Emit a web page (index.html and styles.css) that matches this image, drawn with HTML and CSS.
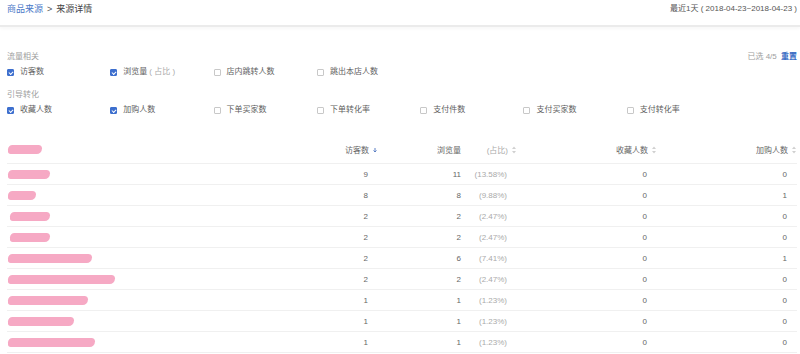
FILE: index.html
```html
<!DOCTYPE html>
<html lang="zh">
<head>
<meta charset="utf-8">
<title>来源详情</title>
<link rel="stylesheet" href="styles.css">
</head>
<body>
<header class="topbar">
  <div class="crumbs"><a class="crumb-link">商品来源</a><span class="crumb-sep">&gt;</span><span class="crumb-cur">来源详情</span></div>
  <div class="range">最近1天 ( 2018-04-23~2018-04-23 )</div>
</header>

<section class="filters">
  <div class="group-head">
    <span class="group-label">流量相关</span>
    <span class="picked">已选 4/5 <a class="reset">重置</a></span>
  </div>
  <div class="check-row">
    <label class="check"><span class="box on"></span>访客数</label>
    <label class="check"><span class="box on"></span>浏览量<span class="sub">( 占比 )</span></label>
    <label class="check"><span class="box"></span>店内跳转人数</label>
    <label class="check"><span class="box"></span>跳出本店人数</label>
  </div>
  <div class="group-head second">
    <span class="group-label">引导转化</span>
  </div>
  <div class="check-row">
    <label class="check"><span class="box on"></span>收藏人数</label>
    <label class="check"><span class="box on"></span>加购人数</label>
    <label class="check"><span class="box"></span>下单买家数</label>
    <label class="check"><span class="box"></span>下单转化率</label>
    <label class="check"><span class="box"></span>支付件数</label>
    <label class="check"><span class="box"></span>支付买家数</label>
    <label class="check"><span class="box"></span>支付转化率</label>
  </div>
</section>

<section class="table">
  <div class="tr th">
    <div class="c name"><span class="blob" style="width:34px"></span></div>
    <div class="c v">访客数<svg class="sort" viewBox="0 0 6 8"><path d="M3 2v4M1.5 4.5l1.5 1.5 1.5-1.5" fill="none" stroke="#5b7fc4" stroke-width="1"/></svg></div>
    <div class="c pv">浏览量</div>
    <div class="c pct">(占比)<svg class="sort" viewBox="0 0 6 8"><path d="M3 0.5L5 3H1z M3 7.5L5 5H1z" fill="#d0d0d0"/></svg></div>
    <div class="c col">收藏人数<svg class="sort" viewBox="0 0 6 8"><path d="M3 0.5L5 3H1z M3 7.5L5 5H1z" fill="#d0d0d0"/></svg></div>
    <div class="c add">加购人数<svg class="sort" viewBox="0 0 6 8"><path d="M3 0.5L5 3H1z M3 7.5L5 5H1z" fill="#d0d0d0"/></svg></div>
  </div>
  <div class="tr"><div class="c name"><span class="blob" style="width:42px"></span></div><div class="c v">9</div><div class="c pv">11</div><div class="c pct">(13.58%)</div><div class="c col">0</div><div class="c add">0</div></div>
  <div class="tr"><div class="c name"><span class="blob" style="width:28px"></span></div><div class="c v">8</div><div class="c pv">8</div><div class="c pct">(9.88%)</div><div class="c col">0</div><div class="c add">1</div></div>
  <div class="tr"><div class="c name"><span class="blob shift" style="width:40px"></span></div><div class="c v">2</div><div class="c pv">2</div><div class="c pct">(2.47%)</div><div class="c col">0</div><div class="c add">0</div></div>
  <div class="tr"><div class="c name"><span class="blob shift" style="width:40px"></span></div><div class="c v">2</div><div class="c pv">2</div><div class="c pct">(2.47%)</div><div class="c col">0</div><div class="c add">0</div></div>
  <div class="tr"><div class="c name"><span class="blob" style="width:84px"></span></div><div class="c v">2</div><div class="c pv">6</div><div class="c pct">(7.41%)</div><div class="c col">0</div><div class="c add">1</div></div>
  <div class="tr"><div class="c name"><span class="blob" style="width:107px"></span></div><div class="c v">2</div><div class="c pv">2</div><div class="c pct">(2.47%)</div><div class="c col">0</div><div class="c add">0</div></div>
  <div class="tr"><div class="c name"><span class="blob" style="width:80px"></span></div><div class="c v">1</div><div class="c pv">1</div><div class="c pct">(1.23%)</div><div class="c col">0</div><div class="c add">0</div></div>
  <div class="tr"><div class="c name"><span class="blob" style="width:66px"></span></div><div class="c v">1</div><div class="c pv">1</div><div class="c pct">(1.23%)</div><div class="c col">0</div><div class="c add">0</div></div>
  <div class="tr"><div class="c name"><span class="blob" style="width:87px"></span></div><div class="c v">1</div><div class="c pv">1</div><div class="c pct">(1.23%)</div><div class="c col">0</div><div class="c add">0</div></div>
</section>
</body>
</html>
```

FILE: styles.css
```css
* { box-sizing: border-box; }
html, body { margin: 0; padding: 0; background: #fff; }
body {
  font-family: "Liberation Sans", "Noto Sans CJK SC", sans-serif;
  font-size: 8px;
  color: #555;
  width: 800px;
  height: 354px;
  overflow: hidden;
}

.topbar {
  height: 27px;
  padding: 3px 3px 0 7px;
  display: flex;
  justify-content: space-between;
  align-items: flex-start;
  border-bottom: 2px solid #ebebeb;
  box-shadow: 0 2px 3px rgba(0,0,0,0.03);
  line-height: 12px;
}
.crumbs { font-size: 9px; color: #444; }
.crumb-link { color: #4a79c8; }
.crumb-sep { margin: 0 4px; color: #555; }
.range { color: #555; font-size: 8px; }

.filters { padding: 24px 3px 0 7px; }
.group-head {
  display: flex;
  justify-content: space-between;
  height: 12px;
  line-height: 12px;
  margin-bottom: 3px;
}
.group-head.second { margin-top: 11px; }
.group-label { color: #a0a0a0; }
.picked { color: #a0a0a0; }
.reset { color: #3a6cc4; font-weight: bold; margin-left: 2px; }

.check-row {
  display: grid;
  grid-template-columns: repeat(7, 103.3px);
  height: 12px;
  line-height: 12px;
}
.check { display: flex; align-items: center; color: #606060; white-space: nowrap; }
.box {
  width: 7px; height: 7px;
  border: 1px solid #c8c8c8;
  border-radius: 1px;
  background: #fff;
  margin-right: 6px;
  position: relative;
  flex: none;
}
.box.on { background: #3d6fce; border-color: #3d6fce; }
.box.on::after {
  content: "";
  position: absolute;
  left: 1px; top: 0px;
  width: 3px; height: 2px;
  border-left: 1px solid #fff;
  border-bottom: 1px solid #fff;
  transform: rotate(-45deg);
  transform-origin: center;
  margin-top: 1px;
}
.sub { color: #aaa; margin-left: 2px; }

.table { margin: 20px 3px 0 7px; }
.tr {
  display: flex;
  height: 21px;
  align-items: center;
  border-bottom: 1px solid #f0f0f0;
  color: #666;
}
.tr.th { height: 28px; color: #666; }
.c { text-align: right; white-space: nowrap; }
.name { width: 291px; text-align: left; display: flex; align-items: center; }
.v { width: 80px; padding-right: 10px; }
.pv { width: 83px; }
.pct { width: 56px; padding-right: 10px; color: #aaa; }
.col { width: 140px; padding-right: 10px; }
.add { width: 140px; padding-right: 10px; }
.th .c { padding-right: 0; }
.th .pct { color: #aaa; }
.sort { width: 6px; height: 8px; margin-left: 3px; vertical-align: -1px; }

.blob {
  display: inline-block;
  height: 9px;
  margin-left: 1px;
  background: #f6a9c4;
  border-radius: 5px 4px 6px 3px;
}
.blob.shift { margin-left: 3px; }
```
